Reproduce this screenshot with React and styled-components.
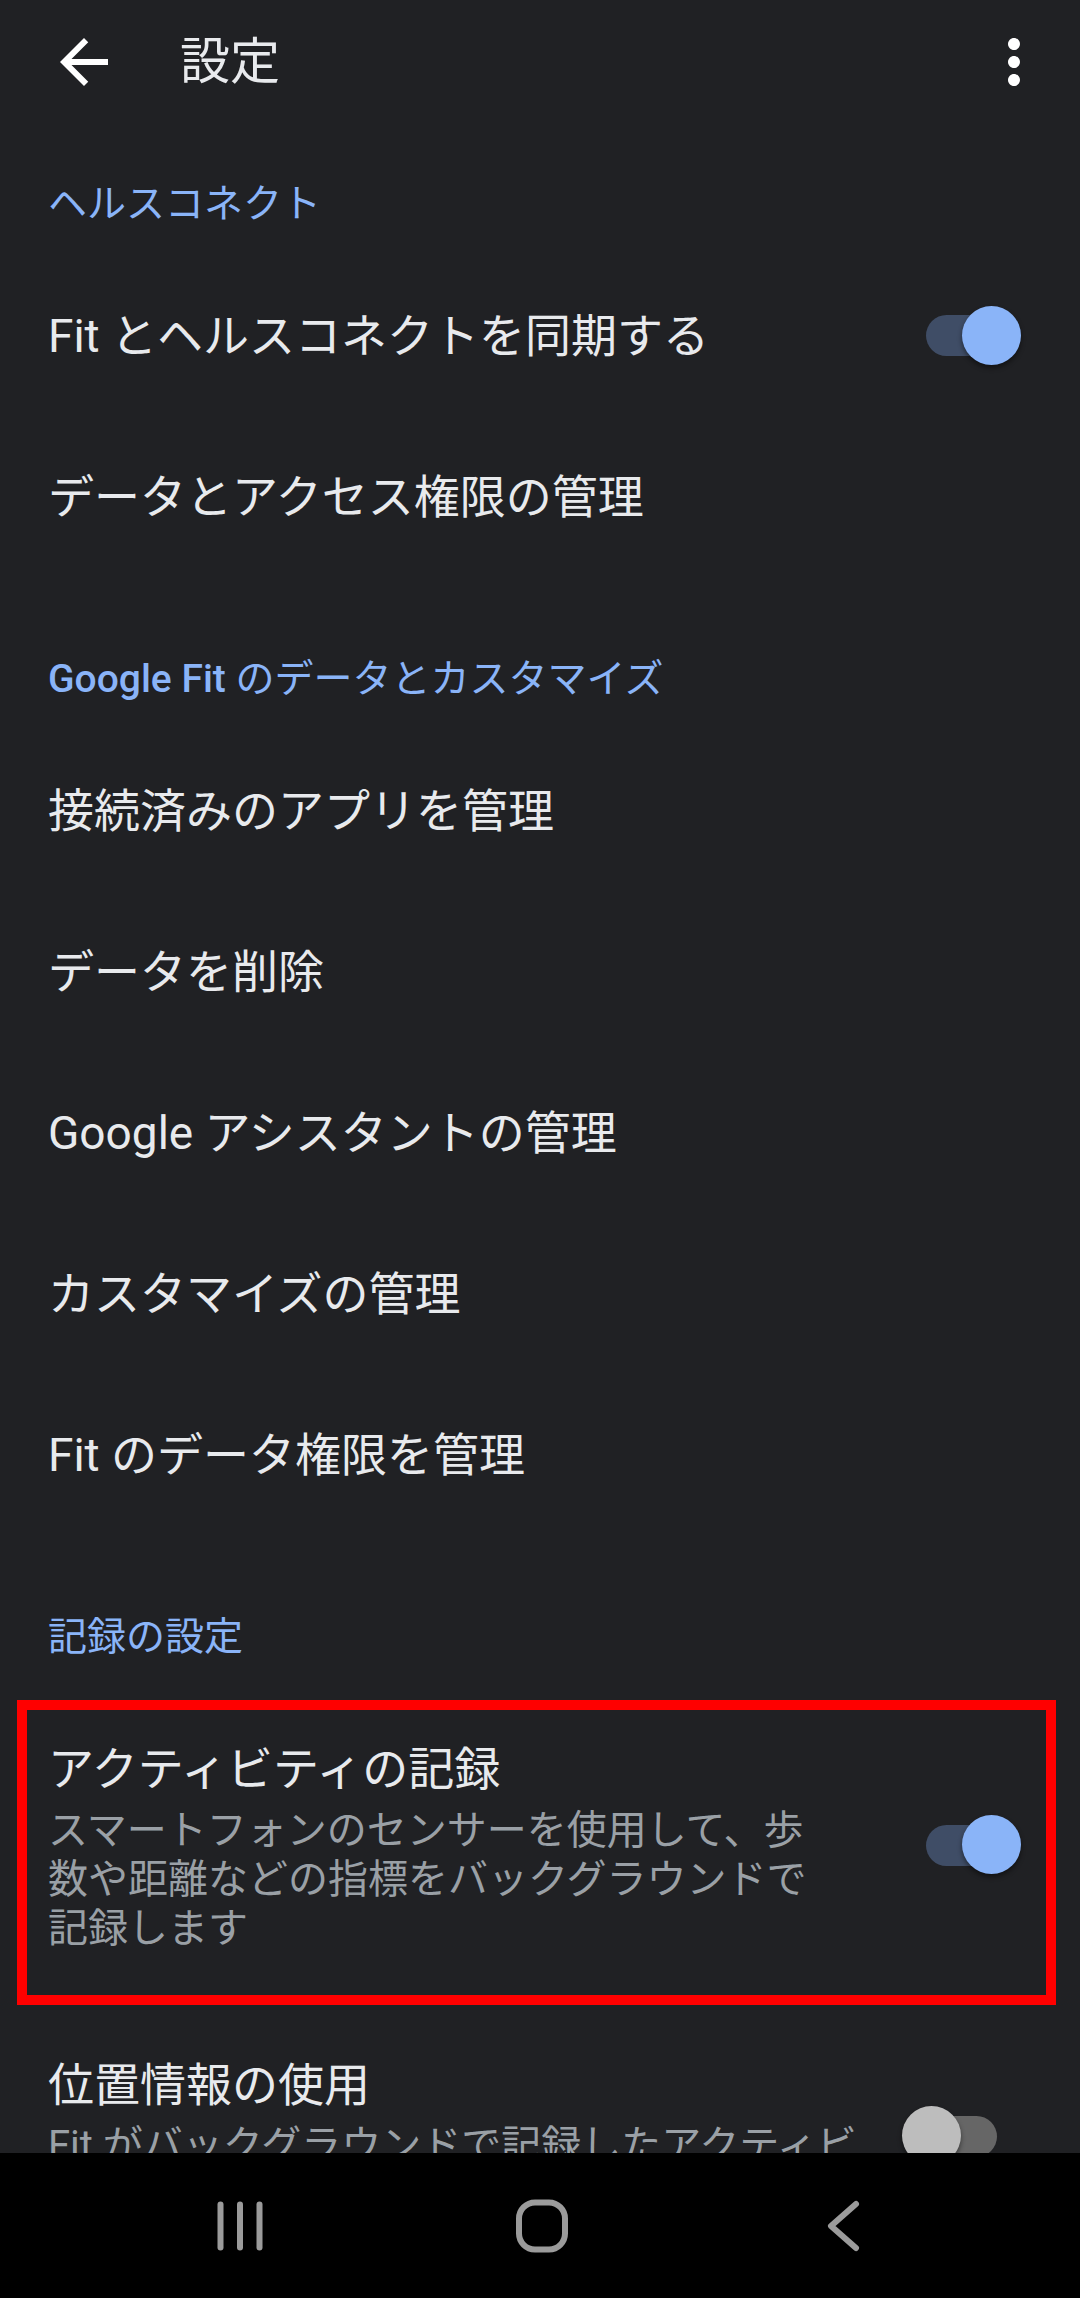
import React from 'react';
import styled, { createGlobalStyle } from 'styled-components';

const GlobalStyle = createGlobalStyle`
    html, body {
        margin: 0;
        padding: 0;
        background: #202124;
    }
    body {
        font-family: Roboto, "Noto Sans CJK JP", "Noto Sans", sans-serif;
        -webkit-font-smoothing: antialiased;
    }
`

const Screen = styled.div`
    width: 1080px;
    height: 2298px;
    display: flex;
    flex-direction: column;
    background: #202124;
    color: #e8eaed;
    overflow: hidden;
`

const Toolbar = styled.header`
    height: 124px;
    flex-shrink: 0;
    display: flex;
    align-items: center;
    padding: 0 30px 0 48px;
`

const IconButton = styled.div`
    width: 72px;
    height: 72px;
    display: flex;
    align-items: center;
    justify-content: center;
    flex-shrink: 0;
`

const Title = styled.h1`
    flex: 1;
    margin: 0 0 0 60px;
    font-size: 50px;
    font-weight: 400;
    line-height: 72px;
    color: #e8eaed;
`

const Content = styled.main`
    flex: 1;
    overflow: hidden;
`

const Section = styled.section`
    margin-top: 46px;
    &:first-child {
        margin-top: 24px;
    }
`

const Heading = styled.h2`
    height: 107px;
    box-sizing: border-box;
    margin: 0;
    padding: 6px 0 0 48px;
    font-size: 39px;
    line-height: 101px;
    font-weight: 400;
    color: #8ab4f8;
`

const Latin = styled.span`
    font-weight: 500;
`

const Row = styled.div`
    position: relative;
    min-height: 161px;
    box-sizing: border-box;
    display: flex;
    align-items: center;
    justify-content: space-between;
    padding: ${p => (p.$tall ? '50px 59px 51px 48px' : '0 59px 0 48px')};

    ${p => p.$marked && `
        &::after {
            content: '';
            position: absolute;
            top: 12px;
            left: 17px;
            right: 24px;
            bottom: -1px;
            border: 10px solid #ff0000;
            pointer-events: none;
        }
    `}
`

const TextBlock = styled.div`
    flex: 1;
    min-width: 0;
`

const Label = styled.div`
    font-size: 46px;
    line-height: 62px;
    color: #e8eaed;
`

const Summary = styled.div`
    margin-top: 5.5px;
    max-width: ${p => p.$width}px;
    font-size: 40px;
    line-height: 49px;
    color: #9aa0a6;
`

const Switch = styled.div`
    position: relative;
    width: 119px;
    height: 60px;
    flex-shrink: 0;
    margin-left: 20px;

    &::before {
        content: '';
        position: absolute;
        left: 24px;
        top: 9.5px;
        width: 71px;
        height: 41px;
        border-radius: 21px;
        background: ${p => (p.$on ? '#3f4d66' : '#666666')};
    }

    &::after {
        content: '';
        position: absolute;
        top: 0;
        left: ${p => (p.$on ? '60px' : '0')};
        width: 59px;
        height: 59px;
        border-radius: 50%;
        background: ${p => (p.$on ? '#8ab4f8' : '#bdbdbd')};
        box-shadow: 0 3px 5px rgba(0, 0, 0, 0.45);
    }
`

const NavBar = styled.nav`
    height: 145px;
    flex-shrink: 0;
    background: #000;
    display: flex;
    align-items: center;
    justify-content: center;
    gap: 202px;
    padding-left: 4px;
`

const NavKey = styled.div`
    width: 100px;
    height: 100px;
    display: flex;
    align-items: center;
    justify-content: center;
`

const BackArrow = () => (
    <svg width="72" height="72" viewBox="0 0 24 24">
        <path fill="#ffffff" d="M20 11H7.83l5.59-5.59L12 4l-8 8 8 8 1.41-1.41L7.83 13H20v-2z" />
    </svg>
)

const MoreVert = () => (
    <svg width="72" height="72" viewBox="0 0 24 24">
        <path fill="#ffffff" d="M12 8c1.1 0 2-.9 2-2s-.9-2-2-2-2 .9-2 2 .9 2 2 2zm0 2c-1.1 0-2 .9-2 2s.9 2 2 2 2-.9 2-2-.9-2-2-2zm0 6c-1.1 0-2 .9-2 2s.9 2 2 2 2-.9 2-2-.9-2-2-2z" />
    </svg>
)

const RecentsIcon = () => (
    <svg width="60" height="60" viewBox="0 0 60 60">
        <rect x="7.5" y="5.5" width="6" height="49" rx="3" fill="#9b9b9b" />
        <rect x="27" y="5.5" width="6" height="49" rx="3" fill="#9b9b9b" />
        <rect x="46.5" y="5.5" width="6" height="49" rx="3" fill="#9b9b9b" />
    </svg>
)

const HomeIcon = () => (
    <svg width="60" height="60" viewBox="0 0 60 60">
        <rect x="7" y="6.5" width="46" height="47" rx="16" fill="none" stroke="#9b9b9b" strokeWidth="6" />
    </svg>
)

const BackKeyIcon = () => (
    <svg width="60" height="60" viewBox="0 0 60 60">
        <polyline points="42,8 17,30 42,52" fill="none" stroke="#9b9b9b" strokeWidth="6" strokeLinecap="round" strokeLinejoin="round" />
    </svg>
)

const sections = [
    {
        heading: 'ヘルスコネクト',
        items: [
            { label: 'Fit とヘルスコネクトを同期する', toggle: true },
            { label: 'データとアクセス権限の管理' },
        ],
    },
    {
        heading: (<><Latin>Google Fit</Latin>{' のデータとカスタマイズ'}</>),
        items: [
            { label: '接続済みのアプリを管理' },
            { label: 'データを削除' },
            { label: 'Google アシスタントの管理' },
            { label: 'カスタマイズの管理' },
            { label: 'Fit のデータ権限を管理' },
        ],
    },
    {
        heading: '記録の設定',
        items: [
            {
                label: 'アクティビティの記録',
                summary: 'スマートフォンのセンサーを使用して、歩数や距離などの指標をバックグラウンドで記録します',
                summaryWidth: 780,
                toggle: true,
                marked: true,
            },
            {
                label: '位置情報の使用',
                summary: 'Fit がバックグラウンドで記録したアクティビティに位置情報を追加します',
                summaryWidth: 870,
                toggle: false,
            },
        ],
    },
]

export default function App() {
    return (
        <>
            <GlobalStyle />
            <Screen>
                <Toolbar>
                    <IconButton><BackArrow /></IconButton>
                    <Title>設定</Title>
                    <IconButton><MoreVert /></IconButton>
                </Toolbar>

                <Content>
                    {sections.map((section, i) => (
                        <Section key={i}>
                            <Heading>{section.heading}</Heading>
                            {section.items.map(item => (
                                <Row key={item.label} $tall={!!item.summary} $marked={item.marked}>
                                    <TextBlock>
                                        <Label>{item.label}</Label>
                                        {item.summary && (
                                            <Summary $width={item.summaryWidth}>{item.summary}</Summary>
                                        )}
                                    </TextBlock>
                                    {item.toggle !== undefined && <Switch $on={item.toggle} />}
                                </Row>
                            ))}
                        </Section>
                    ))}
                </Content>

                <NavBar>
                    <NavKey><RecentsIcon /></NavKey>
                    <NavKey><HomeIcon /></NavKey>
                    <NavKey><BackKeyIcon /></NavKey>
                </NavBar>
            </Screen>
        </>
    )
}
